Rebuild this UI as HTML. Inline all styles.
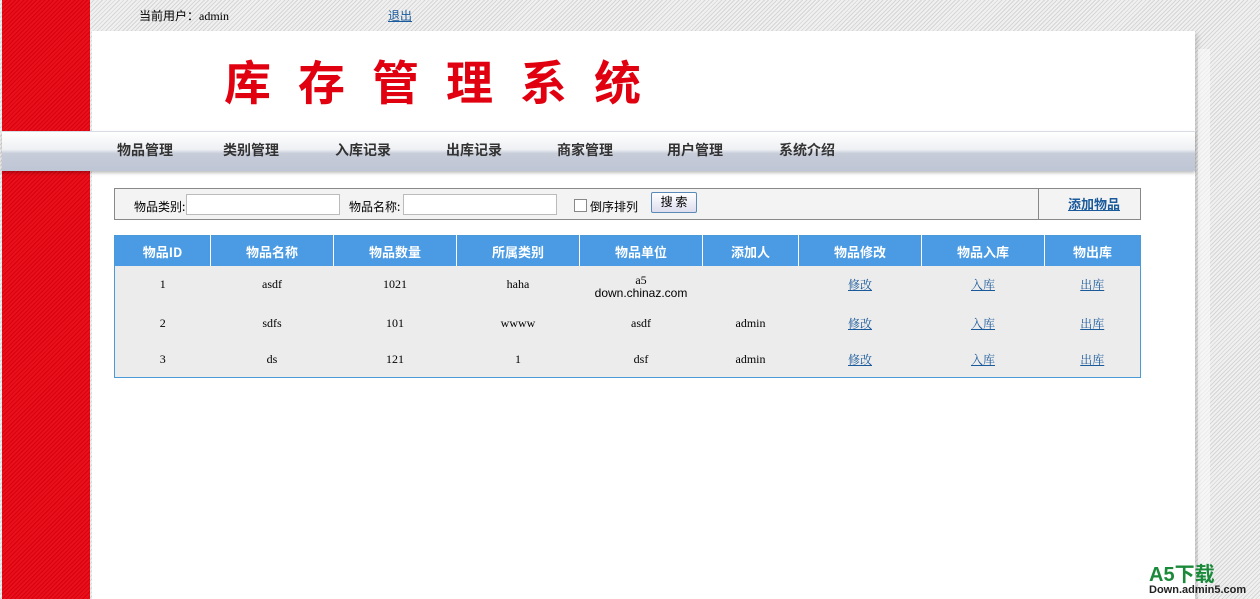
<!DOCTYPE html>
<html><head><meta charset="utf-8"><style>
body{margin:0;width:1260px;height:599px;overflow:hidden;position:relative;font-family:"Liberation Serif","Noto Serif CJK SC",serif;font-size:12px;
background:repeating-linear-gradient(135deg,#d6d6d6 0 1px,#f0f0f0 1px 3px);}
.red{position:absolute;left:2px;top:0;width:88px;height:599px;background:repeating-linear-gradient(135deg,#d9000f 0 1px,#e8101a 1px 3px);}
.main{position:absolute;left:92px;top:31px;width:1103px;height:568px;background:#fff;box-shadow:3px 3px 4px rgba(0,0,0,.15);}
.side{position:absolute;left:1198px;top:49px;width:12px;height:550px;background:#fafafa;opacity:.6}
.top{position:absolute;left:139px;top:7px;font-size:12px;font-family:"Liberation Serif","Noto Sans CJK SC",serif}
.top a{position:absolute;left:249px;top:0;color:#1a5a9a;white-space:nowrap}
.title{position:absolute;left:224px;top:51px;color:#e0000f;font:bold 47px "Noto Sans CJK SC",sans-serif;letter-spacing:27px;line-height:58px}
.nav{position:absolute;left:2px;top:131px;width:1193px;height:39px;background:linear-gradient(#fff,#eef0f3 45%,#c7ccd9 55%,#bec5d4);border-top:1px solid #d8dce4;box-shadow:0 2px 3px rgba(0,0,0,.25)}
.nav span{position:absolute;top:8px;font:bold 14px "Noto Sans CJK SC",sans-serif;color:#333}
.search{position:absolute;left:114px;top:188px;width:1025px;height:30px;border:1px solid #888;background:#f3f3f3;font-family:"Noto Sans CJK SC",sans-serif;font-size:12px}
.search input{position:absolute;top:5px;height:21px;border:1px solid #bbb;background:#fff;box-sizing:border-box;width:154px}
.search .l{position:absolute;top:9px}
table{position:absolute;left:114px;top:235px;width:1027px;border-collapse:collapse;border:1px solid #4a9ad8;background:#ececec}
th{background:#4a9be4;color:#fff;height:30px;font:bold 13px "Noto Sans CJK SC",sans-serif;border-left:1px solid #fff;padding:0}
td{text-align:center;height:36px;padding:0;font-size:12px}
td a{color:#1a5a9a}
</style></head><body>
<div class="red"></div>
<div class="main"></div><div class="side"></div>
<div class="top">当前用户：admin<a href="#">退出</a></div>
<div class="title">库存管理系统</div>
<div class="nav">
<span style="left:115px">物品管理</span><span style="left:221px">类别管理</span><span style="left:333px">入库记录</span><span style="left:444px">出库记录</span><span style="left:555px">商家管理</span><span style="left:665px">用户管理</span><span style="left:777px">系统介绍</span>
</div>
<div class="search">
<span class="l" style="left:19px">物品类别:</span><input style="left:71px">
<span class="l" style="left:234px">物品名称:</span><input style="left:288px">
<span style="position:absolute;left:459px;top:10px;width:11px;height:11px;border:1px solid #888;background:#fff"></span>
<span class="l" style="left:475px">倒序排列</span>
<span style="position:absolute;left:536px;top:3px;width:44px;height:19px;border:1px solid #5a8ab8;border-radius:2px;background:linear-gradient(#fff,#dde);text-align:center;line-height:18px">搜 索</span>
<span style="position:absolute;left:923px;top:0;height:30px;border-left:1px solid #888"></span>
<a style="position:absolute;left:953px;top:5px;color:#1a5a9a;font-weight:bold;font-size:13px" href="#">添加物品</a>
</div>
<table>
<tr><th style="width:95px;border-left:0">物品ID</th><th style="width:122px">物品名称</th><th style="width:122px">物品数量</th><th style="width:122px">所属类别</th><th style="width:122px">物品单位</th><th style="width:95px">添加人</th><th style="width:122px">物品修改</th><th style="width:122px">物品入库</th><th>物出库</th></tr>
<tr><td style="padding-bottom:2px">1</td><td style="padding-bottom:2px">asdf</td><td style="padding-bottom:2px">1021</td><td style="padding-bottom:2px">haha</td><td style="line-height:13px;padding-top:3px">a5<br><span style="font-family:'Liberation Sans',sans-serif">down.chinaz.com</span></td><td></td><td style="padding-bottom:2px"><a href="#">修改</a></td><td style="padding-bottom:2px"><a href="#">入库</a></td><td style="padding-bottom:2px"><a href="#">出库</a></td></tr>
<tr><td>2</td><td>sdfs</td><td>101</td><td>wwww</td><td>asdf</td><td>admin</td><td><a href="#">修改</a></td><td><a href="#">入库</a></td><td><a href="#">出库</a></td></tr>
<tr><td>3</td><td>ds</td><td>121</td><td>1</td><td>dsf</td><td>admin</td><td><a href="#">修改</a></td><td><a href="#">入库</a></td><td><a href="#">出库</a></td></tr>
</table>
<div style="position:absolute;left:1149px;top:564px;color:#1a8a3a;font:bold 20px 'Liberation Sans','Noto Sans CJK SC',sans-serif;line-height:22px">A5下载</div>
<div style="position:absolute;left:1149px;top:584px;color:#222;font:bold 11px 'Liberation Sans',sans-serif">Down.admin5.com</div>
</body></html>
